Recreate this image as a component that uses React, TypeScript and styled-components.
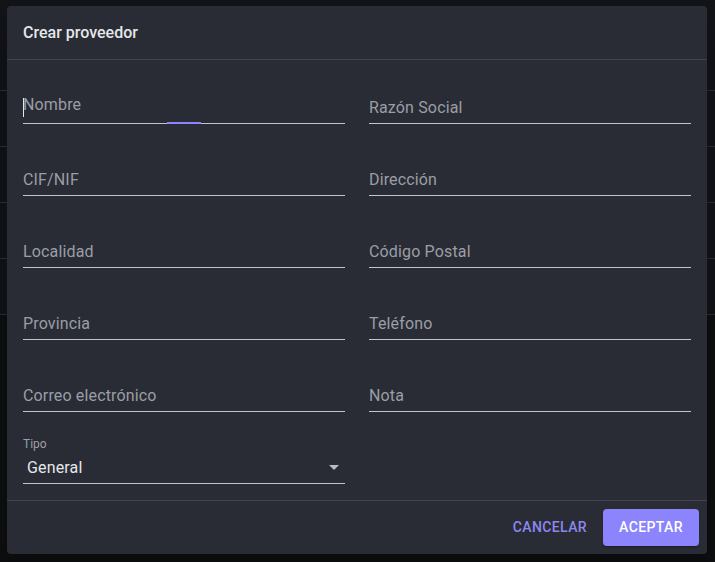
import React from 'react'
import styled, { createGlobalStyle } from 'styled-components'

const GlobalStyle = createGlobalStyle`
    html, body {
        margin: 0;
        padding: 0;
        background: #0e0f11;
        font-family: Roboto, "Liberation Sans", Arial, sans-serif;
    }
    * {
        box-sizing: border-box;
    }
`

const Page = styled.div`
    position: relative;
    width: 715px;
    height: 562px;
    overflow: hidden;
    background: #0e0f11;
`

const BackTable = styled.div`
    display: flex;
    flex-direction: column;
    background: #131418;
`

interface BackRowProps {
    height: number
}

const BackRow = styled.div<BackRowProps>`
    height: ${({ height }: BackRowProps) => height}px;
    border-bottom: 1px solid #2b2d33;
`

const Overlay = styled.div`
    position: absolute;
    inset: 0;
    display: flex;
    align-items: flex-start;
    padding: 6px 0 0 7px;
`

const Dialog = styled.div`
    width: 700px;
    height: 548px;
    background: #292c35;
    border-radius: 4px;
    display: flex;
    flex-direction: column;
    box-shadow: 0 11px 15px -7px rgba(0, 0, 0, 0.2), 0 24px 38px 3px rgba(0, 0, 0, 0.14);
`

const Header = styled.div`
    height: 54px;
    padding: 0 16px 1px;
    display: flex;
    align-items: center;
    border-bottom: 1px solid #42454d;
    color: #e6e7ea;
    font-size: 16px;
    font-weight: 500;
`

const Content = styled.div`
    flex: 1;
    padding: 16px;
    display: grid;
    grid-template-columns: 322px 322px;
    column-gap: 24px;
    row-gap: 24px;
    align-content: start;
`

interface FieldProps {
    focused?: boolean
}

const Field = styled.div<FieldProps>`
    position: relative;
    height: 48px;
    border-bottom: 1px solid #c4c5c9;
    display: flex;
    align-items: flex-end;
    padding-bottom: ${({ focused }: FieldProps) => (focused ? '7px' : '4px')};
`

const Placeholder = styled.span`
    font-size: 16px;
    line-height: 23px;
    color: #9b9ea5;
    letter-spacing: 0.15px;
`

const Caret = styled.span`
    position: absolute;
    left: 0;
    bottom: 6px;
    width: 1px;
    height: 19px;
    background: #e6e7ea;
`

const FocusBar = styled.span`
    position: absolute;
    left: 144px;
    bottom: -1px;
    width: 34px;
    height: 2px;
    background: #8b84ff;
`

const SelectField = styled.div`
    position: relative;
    height: 48px;
    border-bottom: 1px solid #c4c5c9;
    display: flex;
    flex-direction: column;
    justify-content: space-between;
    padding: 1px 0 4px;
`

const SmallLabel = styled.span`
    font-size: 12px;
    line-height: 14px;
    color: #9b9ea5;
`

const SelectRow = styled.div`
    display: flex;
    align-items: center;
    justify-content: space-between;
    padding: 0 6px 0 4px;
`

const SelectValue = styled.span`
    font-size: 16px;
    line-height: 23px;
    color: #e6e7ea;
    letter-spacing: 0.15px;
`

const Footer = styled.div`
    height: 54px;
    border-top: 1px solid #42454d;
    display: flex;
    align-items: center;
    justify-content: flex-end;
    gap: 8px;
    padding: 0 8px 1px;
`

interface ButtonProps {
    primary?: boolean
}

const Button = styled.button<ButtonProps>`
    height: 37px;
    padding: 0 ${({ primary }: ButtonProps) => (primary ? '16px' : '8px')};
    border: none;
    border-radius: 4px;
    font-family: inherit;
    font-size: 14px;
    font-weight: 500;
    letter-spacing: 0.4px;
    text-transform: uppercase;
    cursor: pointer;
    background: ${({ primary }: ButtonProps) => (primary ? '#8b84fd' : 'transparent')};
    color: ${({ primary }: ButtonProps) => (primary ? '#ffffff' : '#8d87f2')};
    box-shadow: ${({ primary }: ButtonProps) =>
        primary ? '0 3px 1px -2px rgba(0,0,0,0.2), 0 2px 2px 0 rgba(0,0,0,0.14)' : 'none'};
`

const fields = [
    'Nombre',
    'Razón Social',
    'CIF/NIF',
    'Dirección',
    'Localidad',
    'Código Postal',
    'Provincia',
    'Teléfono',
    'Correo electrónico',
    'Nota',
]

const ArrowDropDown = () => (
    <svg width="10" height="5" viewBox="0 0 10 5">
        <path d="M0 0 L5 5 L10 0 Z" fill="#b9bbc0" />
    </svg>
)

export default function App() {
    return (
        <Page>
            <GlobalStyle />
            <BackTable>
                <BackRow height={91} />
                <BackRow height={56} />
                <BackRow height={56} />
                <BackRow height={56} />
                <BackRow height={56} />
            </BackTable>
            <Overlay>
                <Dialog>
                    <Header>Crear proveedor</Header>
                    <Content>
                        {fields.map((label, i) => (
                            <Field key={label} focused={i === 0}>
                                {i === 0 && <Caret />}
                                <Placeholder>{label}</Placeholder>
                                {i === 0 && <FocusBar />}
                            </Field>
                        ))}
                        <SelectField>
                            <SmallLabel>Tipo</SmallLabel>
                            <SelectRow>
                                <SelectValue>General</SelectValue>
                                <ArrowDropDown />
                            </SelectRow>
                        </SelectField>
                    </Content>
                    <Footer>
                        <Button>Cancelar</Button>
                        <Button primary>Aceptar</Button>
                    </Footer>
                </Dialog>
            </Overlay>
        </Page>
    )
}
